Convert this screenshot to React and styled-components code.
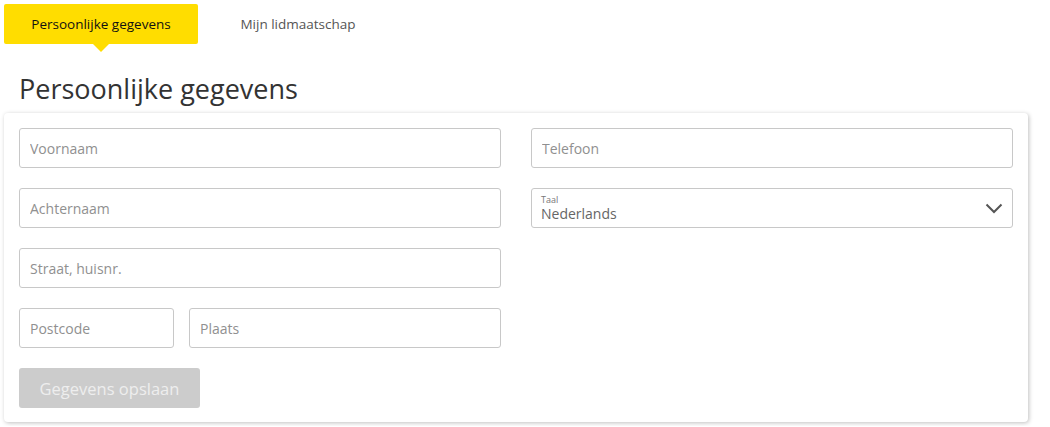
import React from 'react';
import styled, { createGlobalStyle } from 'styled-components';

const GlobalStyle = createGlobalStyle`
    body {
        margin: 0;
        background: #fff;
        font-family: "Open Sans", "Noto Sans", Arial, sans-serif;
        color: #333;
    }
`

const Page = styled.div`
    padding: 4px;
    width: 1024px;
`
const Tabs = styled.div`
    display: flex;
    height: 40px;
`
const Tab = styled.div`
    position: relative;
    display: flex;
    align-items: center;
    justify-content: center;
    width: ${p => p.active ? '194px' : '200px'};
    border-radius: 2px;
    font-size: 13.5px;
    color: ${p => p.active ? '#111' : '#555'};
    background-color: ${p => p.active ? '#ffdd00' : 'transparent'};

    ${p => p.active && `
        &::after {
            content: "";
            position: absolute;
            left: 50%;
            bottom: -8px;
            margin-left: -8px;
            border-left: 8px solid transparent;
            border-right: 8px solid transparent;
            border-top: 8px solid #ffdd00;
        }
    `}
`
const Title = styled.h1`
    margin: 26px 0 0 15px;
    font-size: 27px;
    font-weight: 400;
    line-height: 38px;
    color: #333;
`
const Card = styled.div`
    margin-top: 5px;
    background: #fff;
    border-radius: 4px;
    box-shadow: 1px 1px 4px rgba(0,0,0,0.25);
    padding: 15px 15px 14px;
`
const Grid = styled.div`
    display: grid;
    grid-template-columns: 1fr 1fr;
    column-gap: 30px;
    align-items: start;
`
const Column = styled.div`
    display: flex;
    flex-direction: column;
    gap: 20px;
`
const Row = styled.div`
    display: flex;
    gap: 15px;
`
const Input = styled.input`
    box-sizing: border-box;
    display: block;
    height: 40px;
    width: ${p => p.w || '100%'};
    flex: ${p => p.grow ? '1 1 0' : 'none'};
    min-width: 0;
    border: 1px solid #c8c8c8;
    border-radius: 3px;
    padding: 0 10px;
    font-family: inherit;
    font-size: 14px;
    color: #333;
    outline: none;

    &::placeholder {
        color: #909090;
    }
`
const Select = styled.div`
    box-sizing: border-box;
    position: relative;
    height: 40px;
    border: 1px solid #c8c8c8;
    border-radius: 3px;
    padding: 5px 10px 0 9px;
    display: flex;
    flex-direction: column;
`
const SelectLabel = styled.span`
    font-size: 9px;
    line-height: 11px;
    color: #777;
`
const SelectValue = styled.span`
    font-size: 14px;
    line-height: 18px;
    color: #666;
`
const Chevron = styled.svg`
    position: absolute;
    right: 9px;
    top: 14px;
`
const Button = styled.button`
    display: block;
    margin-top: 20px;
    width: 181px;
    height: 40px;
    border: none;
    border-radius: 3px;
    background: #cccccc;
    color: #eeeeee;
    font-family: inherit;
    font-size: 16.5px;
`

const App = () => {
    return (
        <Page>
            <GlobalStyle />
            <Tabs>
                <Tab active>Persoonlijke gegevens</Tab>
                <Tab>Mijn lidmaatschap</Tab>
            </Tabs>
            <Title>Persoonlijke gegevens</Title>
            <Card>
                <Grid>
                    <Column>
                        <Input placeholder="Voornaam" />
                        <Input placeholder="Achternaam" />
                        <Input placeholder="Straat, huisnr." />
                        <Row>
                            <Input w="155px" placeholder="Postcode" />
                            <Input grow placeholder="Plaats" />
                        </Row>
                    </Column>
                    <Column>
                        <Input placeholder="Telefoon" />
                        <Select>
                            <SelectLabel>Taal</SelectLabel>
                            <SelectValue>Nederlands</SelectValue>
                            <Chevron width="18" height="11" viewBox="0 0 18 11">
                                <path d="M1.5 1.5 L9 9 L16.5 1.5" fill="none" stroke="#555" strokeWidth="2" />
                            </Chevron>
                        </Select>
                    </Column>
                </Grid>
                <Button disabled>Gegevens opslaan</Button>
            </Card>
        </Page>
    )
}

export default App;
